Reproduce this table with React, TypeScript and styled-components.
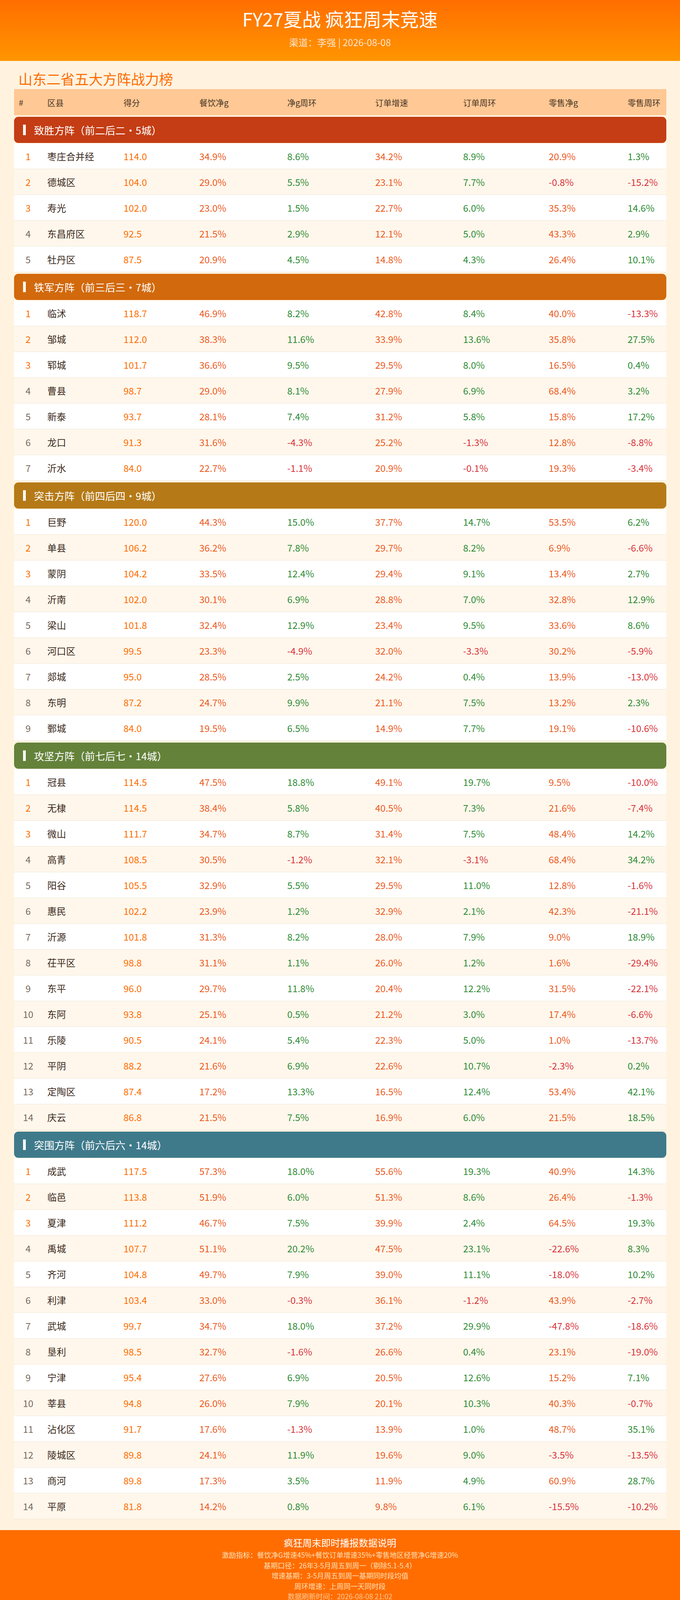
import React from 'react';
import styled, {createGlobalStyle} from 'styled-components';

type Row = [string, string, string, string, string, string, string, string];

interface Group {
    title: string;
    color: string;
    rows: Row[];
}

const groups: Group[] = [
    {
        title: '致胜方阵（前二后二・5城）',
        color: '#C43D14',
        rows: [
            ['枣庄合并经', '114.0', '34.9%', '8.6%', '34.2%', '8.9%', '20.9%', '1.3%'],
            ['德城区', '104.0', '29.0%', '5.5%', '23.1%', '7.7%', '-0.8%', '-15.2%'],
            ['寿光', '102.0', '23.0%', '1.5%', '22.7%', '6.0%', '35.3%', '14.6%'],
            ['东昌府区', '92.5', '21.5%', '2.9%', '12.1%', '5.0%', '43.3%', '2.9%'],
            ['牡丹区', '87.5', '20.9%', '4.5%', '14.8%', '4.3%', '26.4%', '10.1%'],
        ],
    },
    {
        title: '铁军方阵（前三后三・7城）',
        color: '#D2690C',
        rows: [
            ['临沭', '118.7', '46.9%', '8.2%', '42.8%', '8.4%', '40.0%', '-13.3%'],
            ['邹城', '112.0', '38.3%', '11.6%', '33.9%', '13.6%', '35.8%', '27.5%'],
            ['郓城', '101.7', '36.6%', '9.5%', '29.5%', '8.0%', '16.5%', '0.4%'],
            ['曹县', '98.7', '29.0%', '8.1%', '27.9%', '6.9%', '68.4%', '3.2%'],
            ['新泰', '93.7', '28.1%', '7.4%', '31.2%', '5.8%', '15.8%', '17.2%'],
            ['龙口', '91.3', '31.6%', '-4.3%', '25.2%', '-1.3%', '12.8%', '-8.8%'],
            ['沂水', '84.0', '22.7%', '-1.1%', '20.9%', '-0.1%', '19.3%', '-3.4%'],
        ],
    },
    {
        title: '突击方阵（前四后四・9城）',
        color: '#B57A17',
        rows: [
            ['巨野', '120.0', '44.3%', '15.0%', '37.7%', '14.7%', '53.5%', '6.2%'],
            ['单县', '106.2', '36.2%', '7.8%', '29.7%', '8.2%', '6.9%', '-6.6%'],
            ['蒙阴', '104.2', '33.5%', '12.4%', '29.4%', '9.1%', '13.4%', '2.7%'],
            ['沂南', '102.0', '30.1%', '6.9%', '28.8%', '7.0%', '32.8%', '12.9%'],
            ['梁山', '101.8', '32.4%', '12.9%', '23.4%', '9.5%', '33.6%', '8.6%'],
            ['河口区', '99.5', '23.3%', '-4.9%', '32.0%', '-3.3%', '30.2%', '-5.9%'],
            ['郯城', '95.0', '28.5%', '2.5%', '24.2%', '0.4%', '13.9%', '-13.0%'],
            ['东明', '87.2', '24.7%', '9.9%', '21.1%', '7.5%', '13.2%', '2.3%'],
            ['鄄城', '84.0', '19.5%', '6.5%', '14.9%', '7.7%', '19.1%', '-10.6%'],
        ],
    },
    {
        title: '攻坚方阵（前七后七・14城）',
        color: '#64823A',
        rows: [
            ['冠县', '114.5', '47.5%', '18.8%', '49.1%', '19.7%', '9.5%', '-10.0%'],
            ['无棣', '114.5', '38.4%', '5.8%', '40.5%', '7.3%', '21.6%', '-7.4%'],
            ['微山', '111.7', '34.7%', '8.7%', '31.4%', '7.5%', '48.4%', '14.2%'],
            ['高青', '108.5', '30.5%', '-1.2%', '32.1%', '-3.1%', '68.4%', '34.2%'],
            ['阳谷', '105.5', '32.9%', '5.5%', '29.5%', '11.0%', '12.8%', '-1.6%'],
            ['惠民', '102.2', '23.9%', '1.2%', '32.9%', '2.1%', '42.3%', '-21.1%'],
            ['沂源', '101.8', '31.3%', '8.2%', '28.0%', '7.9%', '9.0%', '18.9%'],
            ['茌平区', '98.8', '31.1%', '1.1%', '26.0%', '1.2%', '1.6%', '-29.4%'],
            ['东平', '96.0', '29.7%', '11.8%', '20.4%', '12.2%', '31.5%', '-22.1%'],
            ['东阿', '93.8', '25.1%', '0.5%', '21.2%', '3.0%', '17.4%', '-6.6%'],
            ['乐陵', '90.5', '24.1%', '5.4%', '22.3%', '5.0%', '1.0%', '-13.7%'],
            ['平阴', '88.2', '21.6%', '6.9%', '22.6%', '10.7%', '-2.3%', '0.2%'],
            ['定陶区', '87.4', '17.2%', '13.3%', '16.5%', '12.4%', '53.4%', '42.1%'],
            ['庆云', '86.8', '21.5%', '7.5%', '16.9%', '6.0%', '21.5%', '18.5%'],
        ],
    },
    {
        title: '突围方阵（前六后六・14城）',
        color: '#3F7A8B',
        rows: [
            ['成武', '117.5', '57.3%', '18.0%', '55.6%', '19.3%', '40.9%', '14.3%'],
            ['临邑', '113.8', '51.9%', '6.0%', '51.3%', '8.6%', '26.4%', '-1.3%'],
            ['夏津', '111.2', '46.7%', '7.5%', '39.9%', '2.4%', '64.5%', '19.3%'],
            ['禹城', '107.7', '51.1%', '20.2%', '47.5%', '23.1%', '-22.6%', '8.3%'],
            ['齐河', '104.8', '49.7%', '7.9%', '39.0%', '11.1%', '-18.0%', '10.2%'],
            ['利津', '103.4', '33.0%', '-0.3%', '36.1%', '-1.2%', '43.9%', '-2.7%'],
            ['武城', '99.7', '34.7%', '18.0%', '37.2%', '29.9%', '-47.8%', '-18.6%'],
            ['垦利', '98.5', '32.7%', '-1.6%', '26.6%', '0.4%', '23.1%', '-19.0%'],
            ['宁津', '95.4', '27.6%', '6.9%', '20.5%', '12.6%', '15.2%', '7.1%'],
            ['莘县', '94.8', '26.0%', '7.9%', '20.1%', '10.3%', '40.3%', '-0.7%'],
            ['沾化区', '91.7', '17.6%', '-1.3%', '13.9%', '1.0%', '48.7%', '35.1%'],
            ['陵城区', '89.8', '24.1%', '11.9%', '19.6%', '9.0%', '-3.5%', '-13.5%'],
            ['商河', '89.8', '17.3%', '3.5%', '11.9%', '4.9%', '60.9%', '28.7%'],
            ['平原', '81.8', '14.2%', '0.8%', '9.8%', '6.1%', '-15.5%', '-10.2%'],
        ],
    },
];

const headers = ['#', '区县', '得分', '餐饮净g', '净g周环', '订单增速', '订单周环', '零售净g', '零售周环'];

const notes = [
    '激励指标：餐饮净G增速45%+餐饮订单增速35%+零售地区经营净G增速20%',
    '基期口径：26年3-5月周五到周一（剔除5.1-5.4）',
    '增速基期：3-5月周五到周一基期同时段均值',
    '周环增速：上周同一天同时段',
];

// 净g / 订单增速 / 零售净g 为增速列，其余为周环列
const valueColor = (value: string, idx: number) => {
    if (value.startsWith('-')) return '#D8333A';
    return idx % 2 === 0 ? '#EC5A1E' : '#2E8B34';
};

export default function App() {
    return (
        <>
            <GlobalStyle/>
            <Header>
                <Title>FY27夏战 疯狂周末竞速</Title>
                <SubTitle>渠道：李强 | 2026-08-08</SubTitle>
            </Header>

            <Main>
                <BoardTitle>山东二省五大方阵战力榜</BoardTitle>
                <HeadRow>
                    {headers.map((h) => <span key={h}>{h}</span>)}
                </HeadRow>

                {groups.map((g) => (
                    <section key={g.title}>
                        <GroupBar $color={g.color}>{g.title}</GroupBar>
                        {g.rows.map((r, i) => (
                            <DataRow key={r[0]} $even={i % 2 === 1}>
                                <Rank $top={i < 3}>{i + 1}</Rank>
                                <District>{r[0]}</District>
                                <Score>{r[1]}</Score>
                                {r.slice(2).map((v, j) => (
                                    <Value key={j} $color={valueColor(v, j)}>{v}</Value>
                                ))}
                            </DataRow>
                        ))}
                    </section>
                ))}
            </Main>

            <Footer>
                <FooterTitle>疯狂周末即时播报数据说明</FooterTitle>
                {notes.map((n) => <FooterLine key={n}>{n}</FooterLine>)}
                <FooterLine $faded>数据刷新时间：2026-08-08 21:02</FooterLine>
            </Footer>
        </>
    );
}

const GlobalStyle = createGlobalStyle`
    body {
        margin: 0;
        background: #FFF3E0;
        font-family: "Noto Sans CJK SC", "Noto Sans", sans-serif;
    }
`;

const Header = styled.header`
    height: 156px;
    box-sizing: border-box;
    padding-top: 14px;
    background: linear-gradient(180deg, #FF6E00 0%, #FF9500 100%);
    text-align: center;
    color: #fff;
`;

const Title = styled.h1`
    margin: 0;
    font-size: 48px;
    font-weight: 400;
    line-height: 66px;
`;

const SubTitle = styled.div`
    margin-top: 11px;
    font-size: 24px;
    line-height: 34px;
    color: rgba(255, 255, 255, 0.78);
`;

const Main = styled.main`
    padding: 20px 35px 28px 36px;
`;

const BoardTitle = styled.h2`
    margin: 0 0 2px;
    padding-left: 11px;
    font-size: 36px;
    font-weight: 400;
    line-height: 50px;
    color: #FF6D00;
`;

const columns = '73px 195px 194px 225px 225px 225px 219px 202px 1fr';

const HeadRow = styled.div`
    display: grid;
    grid-template-columns: ${columns};
    align-items: center;
    height: 67px;
    padding: 0 12px;
    background: #FFC894;
    color: #4A3526;
    font-size: 21px;
`;

const GroupBar = styled.div<{ $color: string }>`
    display: flex;
    align-items: center;
    height: 67px;
    margin: 4px 0 1px;
    padding-left: 23px;
    border-radius: 11px;
    background: ${({$color}) => $color};
    color: #fff;
    font-size: 26px;

    &::before {
        content: '';
        width: 7px;
        height: 27px;
        margin-right: 21px;
        background: #fff;
    }
`;

const DataRow = styled.div<{ $even: boolean }>`
    display: grid;
    grid-template-columns: ${columns};
    align-items: center;
    height: 66px;
    box-sizing: border-box;
    padding: 0 12px;
    border-bottom: 1px solid #F1E5D5;
    background: ${({$even}) => ($even ? '#FFF7EC' : '#FFFFFF')};
    font-size: 24px;
`;

const Rank = styled.span<{ $top: boolean }>`
    width: 48px;
    text-align: center;
    color: ${({$top}) => ($top ? '#FF6D00' : '#7A6A5C')};
`;

const District = styled.span`
    color: #3B2A1C;
`;

const Score = styled.span`
    color: #FF6D00;
`;

const Value = styled.span<{ $color: string }>`
    color: ${({$color}) => $color};
`;

const Footer = styled.footer`
    height: 216px;
    box-sizing: border-box;
    padding-top: 14px;
    background: #FF6D00;
    text-align: center;
`;

const FooterTitle = styled.div`
    font-size: 24px;
    line-height: 36px;
    color: #fff;
`;

const FooterLine = styled.div<{ $faded?: boolean }>`
    font-size: 18px;
    line-height: 26.5px;
    color: ${({$faded}) => ($faded ? 'rgba(255, 230, 200, 0.75)' : 'rgba(255, 236, 205, 0.92)')};
`;
